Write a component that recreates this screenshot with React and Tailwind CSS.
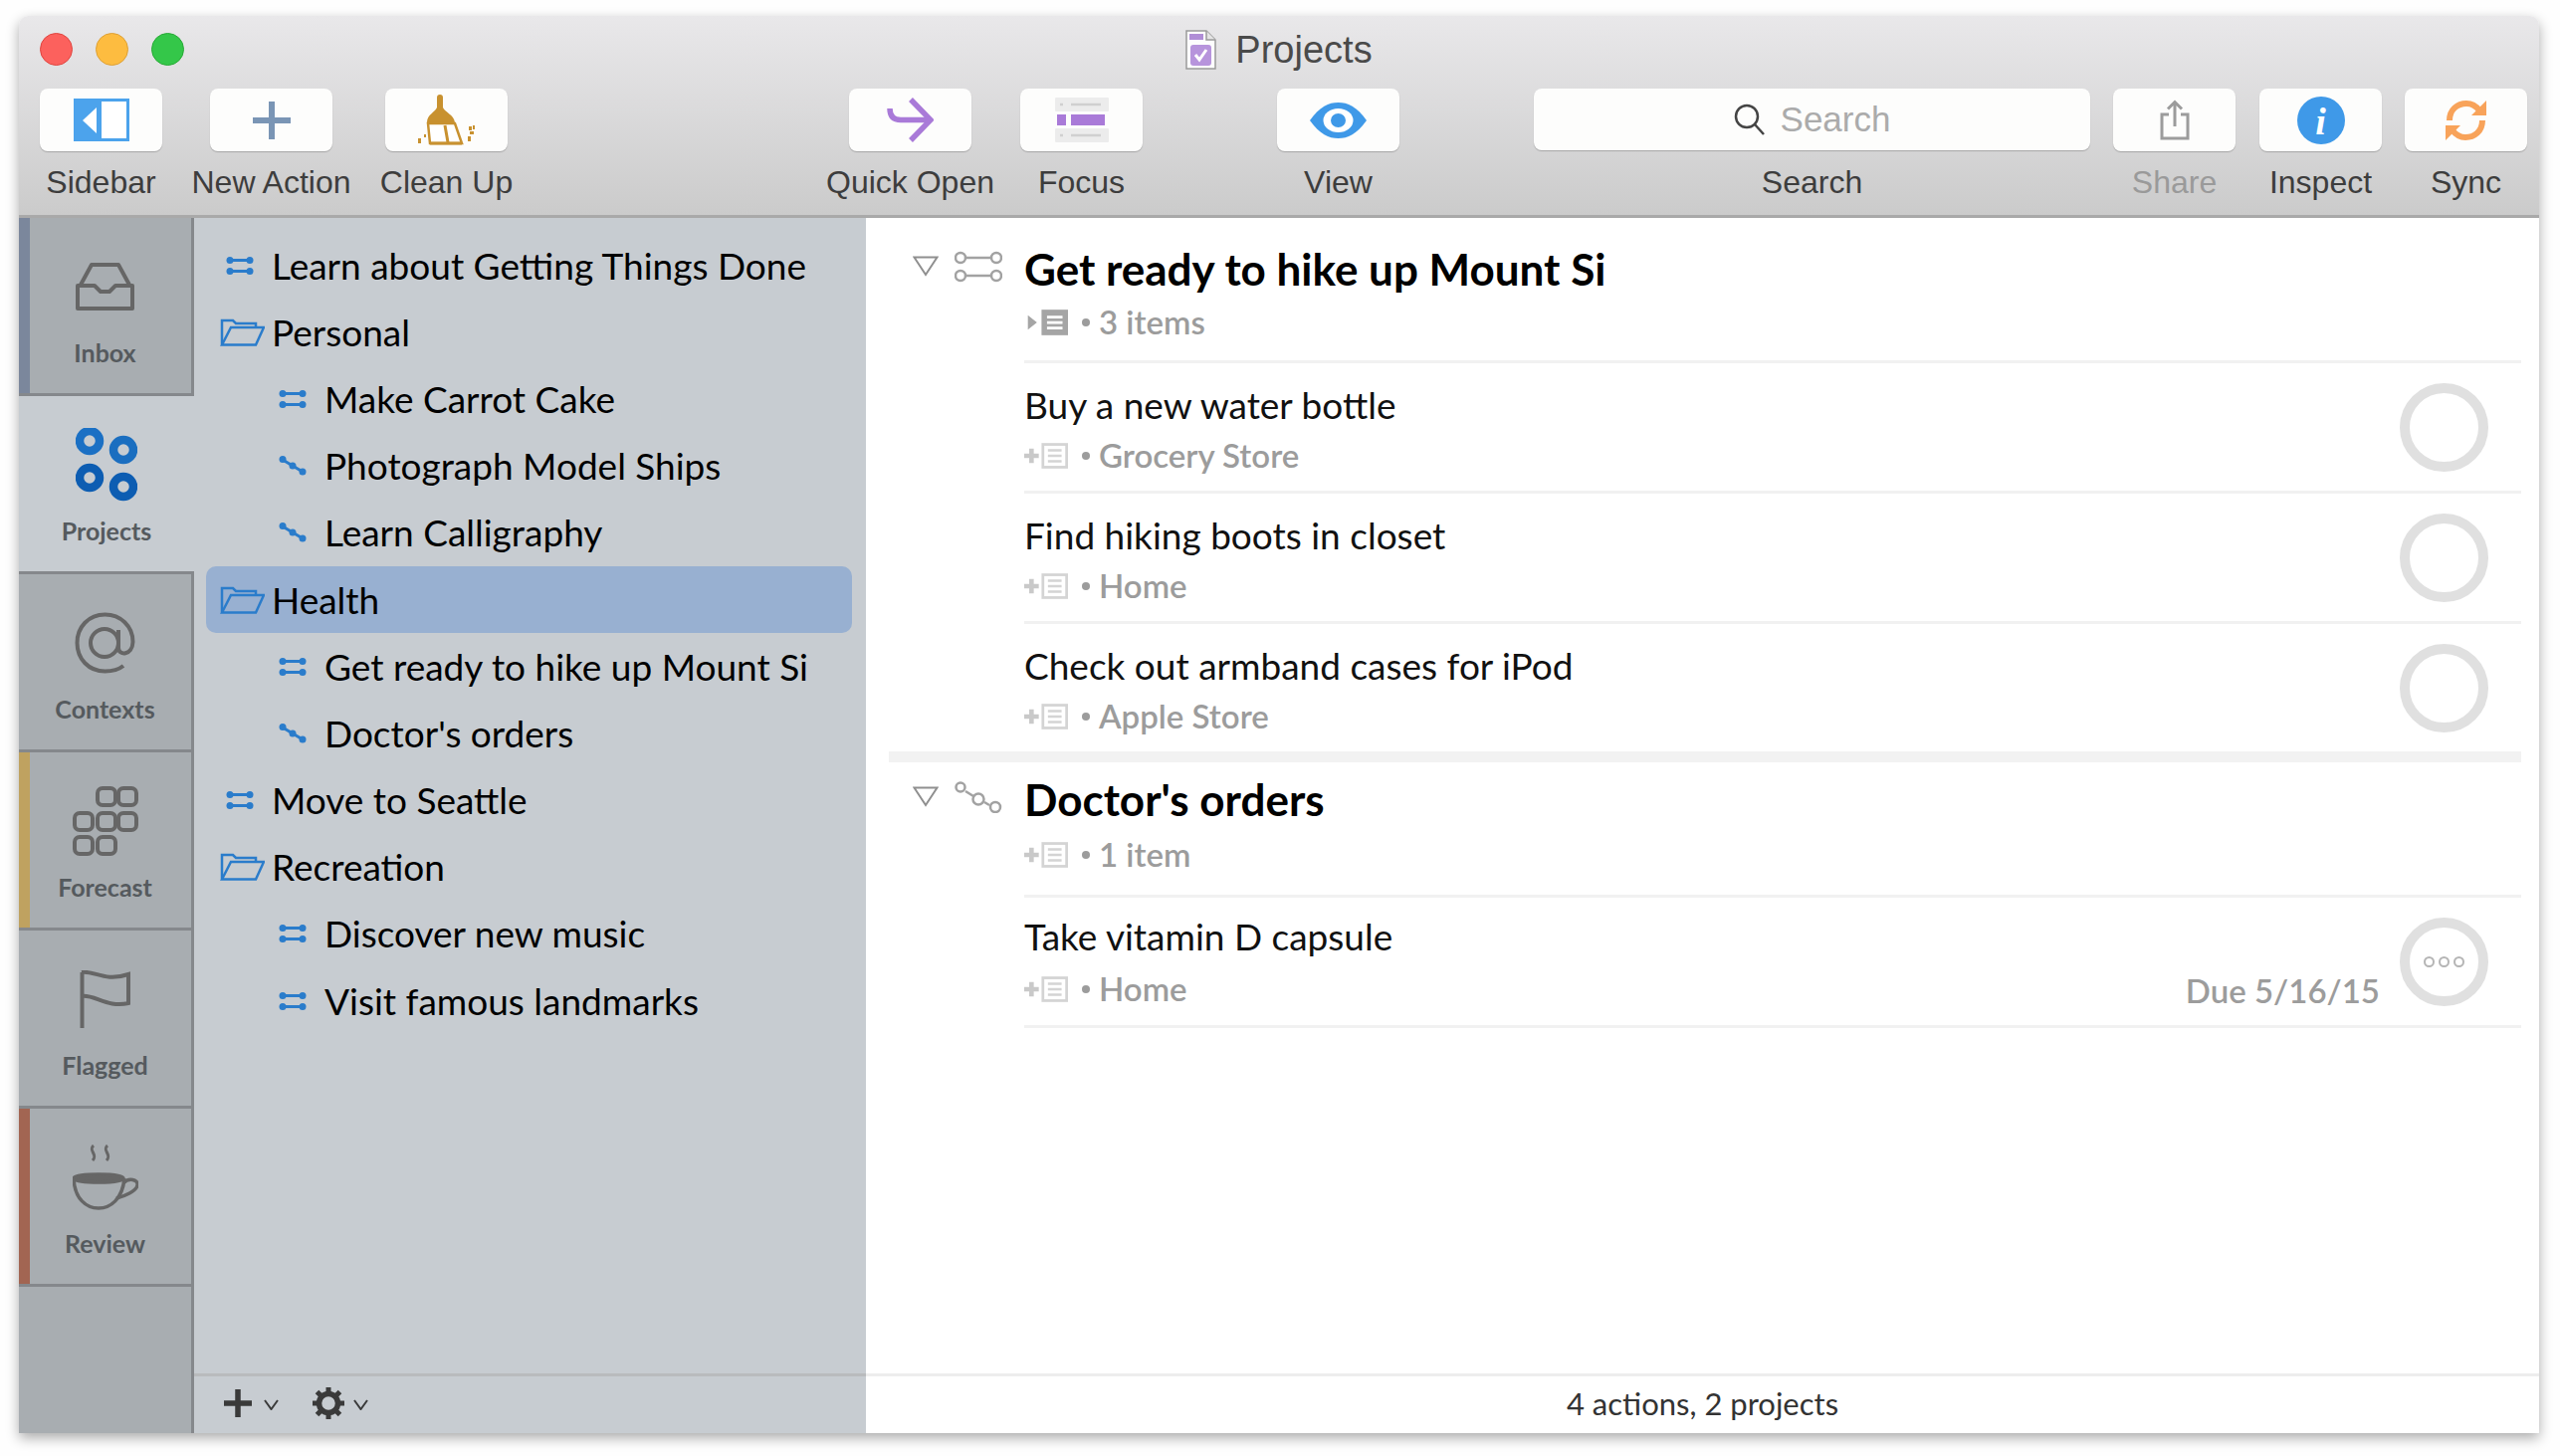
import React from "react";

const UI_FONT = "font-['Lato','Open_Sans',sans-serif]";

const SidebarIcon = () => (
  <svg width="56" height="43" viewBox="0 0 56 43">
    <rect width="56" height="43" fill="#4ca3ec" />
    <rect x="28" y="3" width="25" height="37" fill="#fff" />
    <polygon points="9,22 23,9 23,35" fill="#fff" />
  </svg>
);

const PlusIcon = () => (
  <svg width="40" height="40" viewBox="0 0 40 40">
    <path d="M20 1v38M1 20h38" stroke="#7a95b5" strokeWidth="6" />
  </svg>
);

const BroomIcon = () => (
  <svg width="57" height="51" viewBox="0 0 57 51" fill="#c8912f">
    <path d="M19 15V3a3 3 0 0 1 6 0v12z" />
    <path d="M9 28C9 20 17 18 19 13h6c2 5 11 7 12 15z" />
    <path d="M10 29l2 20h32l-7-20z" fill="#fff" stroke="#c8912f" strokeWidth="2.5" />
    <path d="M27 31l3 17M12 49h32" stroke="#c8912f" strokeWidth="3" fill="none" />
    <rect x="0" y="44" width="3" height="5" />
    <rect x="6" y="40" width="2" height="3" />
    <rect x="50" y="42" width="3" height="5" />
    <rect x="51" y="32" width="3" height="4" />
    <rect x="55" y="31" width="2" height="4" />
    <rect x="52" y="37" width="4" height="3" />
  </svg>
);

const QuickOpenIcon = () => (
  <svg width="47" height="45" viewBox="0 0 47 45" fill="none" stroke="#a97ad8" strokeWidth="5.5">
    <path d="M24 2l20 20.5L24 43" />
    <path d="M3 11c0 7 3 11.500 11 11.500h30" />
  </svg>
);

const FocusIcon = () => (
  <svg width="54" height="45" viewBox="0 0 54 45">
    <rect width="54" height="14" rx="1" fill="#ececec" />
    <rect y="31" width="54" height="14" rx="1" fill="#ececec" />
    <path d="M5 7h3M16 7h30M5 38h3M16 38h30" stroke="#d0d0d0" strokeWidth="2.500" />
    <rect x="2" y="17" width="9" height="11" fill="#a97ad8" />
    <rect x="16" y="17" width="34" height="11" fill="#a97ad8" />
  </svg>
);

const EyeIcon = () => (
  <svg width="57" height="36" viewBox="0 0 57 36">
    <path d="M0 18C10 4 19 0 28.500 0S47 4 57 18c-10 14-19 18-28.500 18S10 32 0 18z" fill="#3f99e8" />
    <ellipse cx="28.500" cy="18" rx="15" ry="12" fill="#fff" />
    <ellipse cx="28.500" cy="18" rx="7.500" ry="7" fill="#3f99e8" />
  </svg>
);

const ShareIcon = () => (
  <svg width="30" height="41" viewBox="0 0 30 41" fill="none" stroke="#9c9c9c" strokeWidth="3">
    <path d="M9 15H2v24h26V15h-7" />
    <path d="M15 27V3M8 9.500L15 2.500l7 7" />
  </svg>
);

const InfoIcon = () => (
  <svg width="48" height="48" viewBox="0 0 48 48">
    <circle cx="24" cy="24" r="24" fill="#3f99e8" />
    <text
      x="23.500"
      y="38"
      textAnchor="middle"
      fontSize="38"
      fontWeight="700"
      fontStyle="italic"
      fontFamily="'Liberation Serif', serif"
      fill="#fff"
    >
      i
    </text>
  </svg>
);

const SyncIcon = () => (
  <svg width="43" height="42" viewBox="0 0 43 42" fill="none" stroke="#f8a35a" strokeWidth="6">
    <path d="M5 21C5 10 13 4 22 4c6 0 10 3 13 7" />
    <path d="M38 21c0 11-8 17-17 17-6 0-10-3-13-7" />
    <polygon points="42,1 42,16 27,16" fill="#f8a35a" stroke="none" />
    <polygon points="1,41 1,26 16,26" fill="#f8a35a" stroke="none" />
  </svg>
);

const SearchIcon = () => (
  <svg width="32" height="32" viewBox="0 0 32 32" fill="none" stroke="#444" strokeWidth="2.500">
    <circle cx="13" cy="13" r="11" />
    <path d="M21 21l9 10" />
  </svg>
);

const DocIcon = () => (
  <svg width="31" height="40" viewBox="0 0 31 40">
    <path d="M1 1h20l9 9v29H1z" fill="#fdfdfd" stroke="#9a9a9a" strokeWidth="1.500" />
    <path d="M21 1v9h9" fill="#e4e4e4" stroke="#9a9a9a" strokeWidth="1.500" />
    <rect x="4" y="4" width="14" height="6" fill="#b08ed6" />
    <rect x="5" y="15" width="21" height="21" rx="3" fill="#b794dc" />
    <path d="M10 25l4 5 7-10" fill="none" stroke="#fff" strokeWidth="3" />
  </svg>
);

const InboxIcon = () => (
  <svg width="61" height="50" viewBox="0 0 61 50" fill="none" stroke="#666" strokeWidth="4" strokeLinejoin="round">
    <path d="M5 25L17 3h27l12 22" />
    <path d="M3 24h17l6 6h9l6-6h17v23H3z" />
  </svg>
);

const ProjectsIcon = () => (
  <svg width="62" height="74" viewBox="0 0 62 74" fill="none" strokeWidth="8.500">
    <circle cx="14" cy="13" r="10" stroke="#1b70c4" />
    <circle cx="48" cy="22" r="10" stroke="#1a6ec0" />
    <circle cx="14" cy="50" r="10" stroke="#0d5db2" />
    <circle cx="48" cy="59" r="10" stroke="#0d5db2" />
  </svg>
);

const AtIcon = () => (
  <svg width="61" height="62" viewBox="0 0 61 62" fill="none" stroke="#666" strokeWidth="4">
    <circle cx="30" cy="31" r="14" />
    <path d="M44 18v18c0 8 14 8 14.500-6 0-16-12.500-27.500-28-27.500C14 2.500 2.500 15 2.500 31s11.500 28.500 28 28.500c7.500 0 13.500-1.500 18.500-5.500" />
  </svg>
);

const ForecastIcon = () => (
  <svg width="66" height="70" viewBox="0 0 66 70" fill="none" stroke="#666" strokeWidth="4">
    <rect x="25" y="2" width="18" height="17" rx="5" />
    <rect x="46" y="2" width="18" height="17" rx="5" />
    <rect x="2" y="27" width="18" height="17" rx="5" />
    <rect x="25" y="27" width="18" height="17" rx="5" />
    <rect x="46" y="27" width="18" height="17" rx="5" />
    <rect x="2" y="51" width="18" height="17" rx="5" />
    <rect x="25" y="51" width="18" height="17" rx="5" />
  </svg>
);

const FlagIcon = () => (
  <svg width="51" height="58" viewBox="0 0 51 58" fill="none" stroke="#666" strokeWidth="4">
    <path d="M2.500 58V2" />
    <path d="M2 2c13-2 23 10 47 2v29c-21 5-34-9-47-7" />
  </svg>
);

const CupIcon = () => (
  <svg width="66" height="67" viewBox="0 0 66 67" fill="none" stroke="#666" strokeWidth="3.500">
    <path d="M21 1c-6 5 5 9-1 15 M35 1c-6 5 5 9-1 15" strokeWidth="3" />
    <ellipse cx="26" cy="34" rx="25" ry="4" fill="#666" />
    <path d="M1 34c1 21 13 30 25 30s24-9 26-30" />
    <path d="M51 39c5-6 15-4 14 2-1 6-13 11-21 13" />
  </svg>
);

const GearIcon = () => (
  <svg width="34" height="34" viewBox="0 0 34 34" fill="none" stroke="#3a3a3a">
    <circle cx="17" cy="17" r="9.500" strokeWidth="5.500" />
    <path
      d="M17 1v6M17 27v6M1 17h6M27 17h6M5.500 5.500l4 4M24.500 24.500l4 4M28.500 5.500l-4 4M9.500 24.500l-4 4"
      strokeWidth="5"
    />
  </svg>
);

const Chevron = () => (
  <svg width="15" height="11" viewBox="0 0 15 11" fill="none" stroke="#3a3a3a" strokeWidth="2">
    <path d="M1 1l6.500 9L14 1" />
  </svg>
);

const BlueParallel = () => (
  <svg width="28" height="20" viewBox="0 0 28 20" fill="#2a7ccb" stroke="#2a7ccb">
    <path d="M4 4.500h20M4 15.500h20" strokeWidth="3" />
    <circle cx="4" cy="4.500" r="3.500" stroke="none" />
    <circle cx="24" cy="4.500" r="3.500" stroke="none" />
    <circle cx="4" cy="15.500" r="3.500" stroke="none" />
    <circle cx="24" cy="15.500" r="3.500" stroke="none" />
  </svg>
);

const BlueSequential = () => (
  <svg width="28" height="20" viewBox="0 0 28 20" fill="#2a7ccb" stroke="#2a7ccb">
    <path d="M4 4l10 6 10 6" strokeWidth="3" />
    <circle cx="4" cy="3.500" r="3.500" stroke="none" />
    <circle cx="14" cy="10" r="3.500" stroke="none" />
    <circle cx="24" cy="16" r="3.500" stroke="none" />
  </svg>
);

const FolderIcon = () => (
  <svg width="45" height="28" viewBox="0 0 45 28" fill="none" stroke="#2a7ccb" strokeWidth="2.500">
    <path d="M2 26V2h11l3 3h20v4" />
    <path d="M2 26.500h34L44 9H11z" />
  </svg>
);

const GrayParallel = () => (
  <svg width="48" height="32" viewBox="0 0 48 32" fill="none" stroke="#a2a2a2" strokeWidth="2.500">
    <path d="M11 7h26M11 25h26" />
    <circle cx="6" cy="7" r="5" />
    <circle cx="42" cy="7" r="5" />
    <circle cx="6" cy="25" r="5" />
    <circle cx="42" cy="25" r="5" />
  </svg>
);

const GraySequential = () => (
  <svg width="48" height="32" viewBox="0 0 48 32" fill="none" stroke="#a2a2a2" strokeWidth="2.500">
    <path d="M11 10l8 5M30 21l5 3" />
    <circle cx="6" cy="6" r="4.500" />
    <circle cx="24" cy="18" r="5.500" />
    <circle cx="41" cy="26" r="5" />
  </svg>
);

const DisclosureIcon = () => (
  <svg width="26" height="21" viewBox="0 0 26 21" fill="none" stroke="#8f8f8f" strokeWidth="2">
    <path d="M1.500 1.500h23L13 19z" />
  </svg>
);

const NoteOutline = () => (
  <svg width="44" height="28" viewBox="0 0 48 28" fill="none">
    <path d="M0 14h16M8 6v16" stroke="#c9c9c9" strokeWidth="5" />
    <rect x="20.500" y="1.500" width="26" height="25" stroke="#d4d4d4" strokeWidth="3" />
    <path d="M26 8h15M26 14h15M26 20h15" stroke="#d4d4d4" strokeWidth="2.500" />
  </svg>
);

const NoteFilled = () => (
  <svg width="44" height="28" viewBox="0 0 48 28">
    <polygon points="4,6 14,14 4,22" fill="#a5a5a5" />
    <rect x="19" y="0" width="29" height="28" fill="#a5a5a5" />
    <path d="M25 8h17M25 14h17M25 20h17" stroke="#fff" strokeWidth="3" />
  </svg>
);

const TOOLBAR_ITEMS = [
  { label: "Sidebar", icon: SidebarIcon, gap: "ml-0" },
  { label: "New Action", icon: PlusIcon, gap: "ml-[48px]" },
  { label: "Clean Up", icon: BroomIcon, gap: "ml-[53px]" },
  { label: "Quick Open", icon: QuickOpenIcon, gap: "ml-[343px]" },
  { label: "Focus", icon: FocusIcon, gap: "ml-[49px]" },
  { label: "View", icon: EyeIcon, gap: "ml-[135px]" },
];

const TOOLBAR_RIGHT = [
  { label: "Share", icon: ShareIcon, gap: "ml-[23px]", muted: true },
  { label: "Inspect", icon: InfoIcon, gap: "ml-[24px]" },
  { label: "Sync", icon: SyncIcon, gap: "ml-[23px]" },
];

const ToolbarItem = ({ item }) => {
  const Icon = item.icon;
  return (
    <div className={`flex w-[123px] flex-col items-center ${item.gap}`}>
      <div className="flex h-[63px] w-full items-center justify-center rounded-[8px] bg-[#fdfdfc] shadow-[0_1px_1px_rgba(0,0,0,0.22)]">
        <Icon />
      </div>
      <span
        className={`mt-[12px] text-[32px] leading-[38px] whitespace-nowrap ${
          item.muted ? "text-[#9a9a9a]" : "text-[#3d3d3d]"
        }`}
      >
        {item.label}
      </span>
    </div>
  );
};

const TABS = [
  { label: "Inbox", icon: InboxIcon, stripe: "bg-[#7b879c]" },
  { label: "Projects", icon: ProjectsIcon, active: true },
  { label: "Contexts", icon: AtIcon },
  { label: "Forecast", icon: ForecastIcon, stripe: "bg-[#bfa260]" },
  { label: "Flagged", icon: FlagIcon },
  { label: "Review", icon: CupIcon, stripe: "bg-[#a26552]", lift: "mb-[13px]" },
];

const Tab = ({ tab }) => {
  const Icon = tab.icon;
  return (
    <div
      className={`relative flex h-[179px] flex-col items-center border-b-[3px] border-[#85888c] pt-[14px] ${
        tab.active ? "bg-[#c7ccd1]" : "border-r-[3px]"
      }`}
    >
      {tab.stripe && <span className={`absolute inset-y-0 left-0 w-[11px] ${tab.stripe}`} />}
      <div className={`flex h-[110px] items-center justify-center ${tab.lift || ""}`}>
        <Icon />
      </div>
      <span className={`-mt-[3px] text-[25px] leading-[28px] font-bold text-[#555a5e] ${tab.lift ? "-mt-[16px]" : ""}`}>
        {tab.label}
      </span>
    </div>
  );
};

const OUTLINE = [
  { label: "Learn about Getting Things Done", icon: BlueParallel, pad: "pl-[20px]", gap: "gap-[18px]" },
  { label: "Personal", icon: FolderIcon, pad: "pl-[14px]", gap: "gap-[7px]" },
  { label: "Make Carrot Cake", icon: BlueParallel, pad: "pl-[73px]", gap: "gap-[18px]" },
  { label: "Photograph Model Ships", icon: BlueSequential, pad: "pl-[73px]", gap: "gap-[18px]" },
  { label: "Learn Calligraphy", icon: BlueSequential, pad: "pl-[73px]", gap: "gap-[18px]" },
  { label: "Health", icon: FolderIcon, pad: "pl-[14px]", gap: "gap-[7px]", selected: true },
  { label: "Get ready to hike up Mount Si", icon: BlueParallel, pad: "pl-[73px]", gap: "gap-[18px]" },
  { label: "Doctor's orders", icon: BlueSequential, pad: "pl-[73px]", gap: "gap-[18px]" },
  { label: "Move to Seattle", icon: BlueParallel, pad: "pl-[20px]", gap: "gap-[18px]" },
  { label: "Recreation", icon: FolderIcon, pad: "pl-[14px]", gap: "gap-[7px]" },
  { label: "Discover new music", icon: BlueParallel, pad: "pl-[73px]", gap: "gap-[18px]" },
  { label: "Visit famous landmarks", icon: BlueParallel, pad: "pl-[73px]", gap: "gap-[18px]" },
];

const OutlineRow = ({ row }) => {
  const Icon = row.icon;
  return (
    <div
      className={`flex h-[67.2px] items-center rounded-[10px] ${row.pad} ${row.gap} ${
        row.selected ? "bg-[#98b0d1]" : ""
      }`}
    >
      <Icon />
      <span className="text-[37px] leading-[44px] whitespace-nowrap text-black">{row.label}</span>
    </div>
  );
};

const SubLine = ({ text, filled, className }) => (
  <div className={`flex h-[44px] items-center text-[33px] font-semibold text-[#9c9c9c] ${className || ""}`}>
    {filled ? <NoteFilled /> : <NoteOutline />}
    <span className="mx-[14px] h-[8px] w-[8px] rounded-full bg-[#9c9c9c]" />
    <span className="-ml-[5px] whitespace-nowrap">{text}</span>
  </div>
);

const ProjectHeader = ({ title, sub, icon, filled, height, subGap }) => {
  const Icon = icon;
  return (
    <div className="flex">
      <div className="flex w-[136px] shrink-0 items-start gap-[16px] pt-[22px] pl-[24px]">
        <span className="mt-[2px]">
          <DisclosureIcon />
        </span>
        <span className="-mt-[3px]">
          <Icon />
        </span>
      </div>
      <div className={`flex-1 border-b-[3px] border-[#f1f1f1] ${height}`}>
        <div className="mt-[10px] text-[44px] leading-[54px] font-bold text-black">{title}</div>
        <SubLine text={sub} filled={filled} className={subGap} />
      </div>
    </div>
  );
};

const ActionRow = ({ title, where, due, last, top, subGap }) => (
  <div className={`ml-[136px] flex items-center pr-[33px] ${last ? "h-[128px]" : "h-[131px] border-b-[3px] border-[#f1f1f1]"}`}>
    <div className="flex-1 self-start">
      <div className={`text-[37px] leading-[44px] text-[#111] ${top}`}>{title}</div>
      <SubLine text={where} className={subGap} />
    </div>
    {due && (
      <span className="mr-[20px] self-end mb-[13px] text-[33px] leading-[44px] font-semibold text-[#9c9c9c]">
        {due}
      </span>
    )}
    <div className="flex h-[89px] w-[89px] items-center justify-center gap-[4px] rounded-full border-[10px] border-[#e0e0e0]">
      {due && (
        <>
          <span className="h-[11px] w-[11px] rounded-full border-2 border-[#b5b5b5]" />
          <span className="h-[11px] w-[11px] rounded-full border-2 border-[#b5b5b5]" />
          <span className="h-[11px] w-[11px] rounded-full border-2 border-[#b5b5b5]" />
        </>
      )}
    </div>
  </div>
);

const App = () => {
  return (
    <div className={`h-[1463px] w-[2572px] bg-[#fefefe] pt-[16px] pl-[19px] ${UI_FONT}`}>
      <div className="flex h-[1424px] w-[2532px] flex-col rounded-t-[9px] bg-white shadow-[0_5px_13px_rgba(0,0,0,0.33)]">
        {/* title bar and toolbar */}
        <div className="h-[203px] rounded-t-[9px] border-b-[3px] border-[#a9a9a9] bg-linear-to-b from-[#e9e8ea] to-[#cbcbcb] font-['Liberation_Sans',Arial,sans-serif]">
          <div className="grid h-[56px] grid-cols-[1fr_auto_1fr] items-center px-[21px] pt-[11px]">
            <div className="flex gap-[23px]">
              <span className="h-[33px] w-[33px] rounded-full border border-[#e0443e] bg-[#fc615d]" />
              <span className="h-[33px] w-[33px] rounded-full border border-[#dea034] bg-[#fdbc40]" />
              <span className="h-[33px] w-[33px] rounded-full border border-[#27aa35] bg-[#34c749]" />
            </div>
            <div className="flex items-center gap-[19px]">
              <DocIcon />
              <span className="text-[38px] leading-[44px] text-[#4a4a4a]">Projects</span>
            </div>
            <div />
          </div>
          <div className="mt-[17px] flex pl-[21px]">
            {TOOLBAR_ITEMS.map((item) => (
              <ToolbarItem key={item.label} item={item} />
            ))}
            <div className="ml-[135px] flex w-[559px] flex-col items-center">
              <div className="flex h-[62px] w-full items-center justify-center gap-[15px] rounded-[8px] bg-[#fdfdfc] shadow-[0_1px_1px_rgba(0,0,0,0.22)]">
                <SearchIcon />
                <span className="text-[35px] text-[#ababab]">Search</span>
              </div>
              <span className="mt-[13px] text-[32px] leading-[38px] text-[#3d3d3d]">Search</span>
            </div>
            {TOOLBAR_RIGHT.map((item) => (
              <ToolbarItem key={item.label} item={item} />
            ))}
          </div>
        </div>

        <div className="flex min-h-0 flex-1">
          {/* perspective tabs */}
          <div className="flex w-[176px] shrink-0 flex-col bg-[#a8adb1]">
            {TABS.map((tab) => (
              <Tab key={tab.label} tab={tab} />
            ))}
            <div className="flex-1 border-r-[3px] border-[#85888c]" />
          </div>

          {/* sidebar outline */}
          <div className="flex w-[675px] shrink-0 flex-col bg-[#c7ccd1]">
            <div className="flex-1 pt-[14px] pr-[14px] pl-[12px]">
              {OUTLINE.map((row) => (
                <OutlineRow key={row.label} row={row} />
              ))}
            </div>
            <div className="flex h-[60px] items-center border-t-[3px] border-[#b9bbbd] pb-[3px] pl-[29px]">
              <PlusIcon2 />
              <span className="mt-[2px] ml-[11px]">
                <Chevron />
              </span>
              <span className="ml-[33px]">
                <GearIcon />
              </span>
              <span className="mt-[2px] ml-[8px]">
                <Chevron />
              </span>
            </div>
          </div>

          {/* main outline */}
          <div className="flex min-w-0 flex-1 flex-col">
            <div className="flex-1 pt-[14px] pr-[18px] pl-[23px]">
              <div className="border-b-[11px] border-[#f2f2f2]">
                <ProjectHeader
                  title="Get ready to hike up Mount Si"
                  sub="3 items"
                  icon={GrayParallel}
                  filled
                  height="h-[132px]"
                  subGap="mt-[5px]"
                />
                <ActionRow title="Buy a new water bottle" where="Grocery Store" top="pt-[20px]" subGap="mt-[7px]" />
                <ActionRow title="Find hiking boots in closet" where="Home" top="pt-[20px]" subGap="mt-[7px]" />
                <ActionRow title="Check out armband cases for iPod" where="Apple Store" last top="pt-[20px]" subGap="mt-[7px]" />
              </div>
              <ProjectHeader
                title="Doctor's orders"
                sub="1 item"
                icon={GraySequential}
                height="h-[136px]"
                subGap="mt-[7px]"
              />
              <ActionRow
                title="Take vitamin D capsule"
                where="Home"
                due="Due 5/16/15"
                top="pt-[17px]"
                subGap="mt-[9px]"
              />
            </div>
            <div className="flex h-[60px] items-center justify-center border-t-[3px] border-[#ededed] pb-[3px] text-[31px] text-[#333]">
              4 actions, 2 projects
            </div>
          </div>
        </div>
      </div>
    </div>
  );
};

const PlusIcon2 = () => (
  <svg width="30" height="30" viewBox="0 0 30 30">
    <path d="M15 1v28M1 15h28" stroke="#3a3a3a" strokeWidth="5.500" />
  </svg>
);

export default App;
